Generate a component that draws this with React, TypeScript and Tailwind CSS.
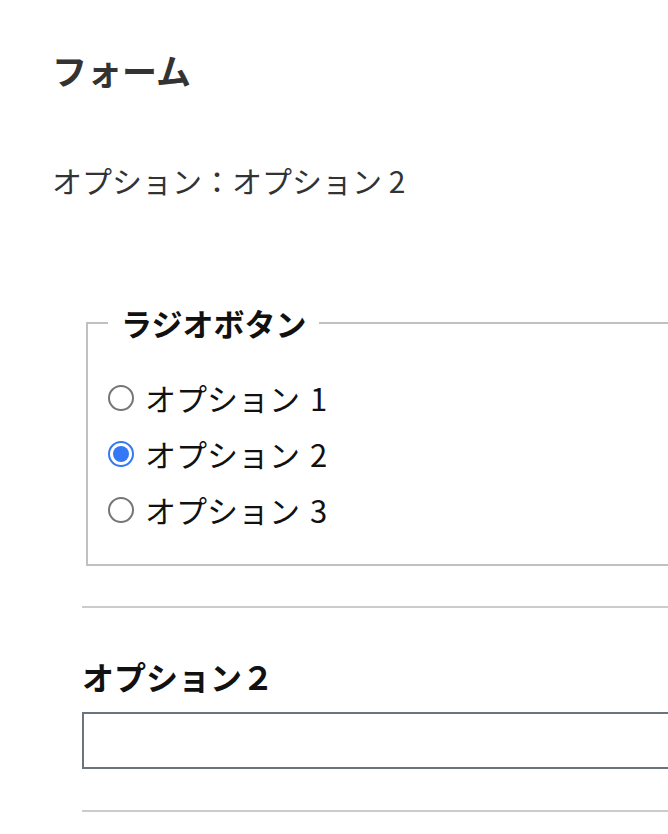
import { useState } from "react";

const OPTIONS = ["1", "2", "3"];

function Radio({ checked }: { checked: boolean }) {
  return checked ? (
    <span className="flex h-[26px] w-[26px] shrink-0 items-center justify-center rounded-full border-[2.5px] border-[#3478f6] bg-white">
      <span className="h-[16px] w-[16px] rounded-full bg-[#3478f6]" />
    </span>
  ) : (
    <span className="h-[26px] w-[26px] shrink-0 rounded-full border-2 border-[#767676] bg-white" />
  );
}

export default function App() {
  const [value, setValue] = useState(1);
  const [text, setText] = useState("");

  return (
    <div className="w-[668px] overflow-hidden bg-white pb-[40px] pl-[52px] font-['Noto_Sans_CJK_JP',sans-serif]">
      <div className="w-[760px]">
        <h1 className="pt-[50px] text-[35px] leading-[40px] font-bold text-[#333]">フォーム</h1>
        <p className="mt-[70px] text-[30px] leading-[40px] text-[#333]">
          オプション：オプション {OPTIONS[value]}
        </p>

        <fieldset className="mt-[105px] ml-[34px] border-2 border-[#c0c0c0] px-[20px] pb-[26px]">
          <legend className="px-[13px] text-[31px] leading-[36px] font-bold text-[#111]">
            ラジオボタン
          </legend>
          <div className="mt-[29px] flex flex-col">
            {OPTIONS.map((o, i) => (
              <label
                key={o}
                className="flex h-[56px] cursor-pointer items-center gap-[11px] text-[31px] text-[#111]"
                onClick={() => setValue(i)}
              >
                <Radio checked={value === i} />
                <span className="leading-[56px]">
                  オプション<span className="ml-[10px]">{o}</span>
                </span>
              </label>
            ))}
          </div>
        </fieldset>

        <div className="ml-[30px]">
          <hr className="mt-[40px] border-t-2 border-[#cccccc]" />
          <p className="mt-[48px] text-[32px] leading-[40px] font-bold text-[#111]">
            オプション２
          </p>
          <input
            value={text}
            onChange={(e) => setText(e.target.value)}
            className="mt-[16px] block h-[57px] w-full border-2 border-[#6b747c] bg-white px-3 text-[28px] outline-none"
          />
          <hr className="mt-[41px] border-t-2 border-[#cccccc]" />
        </div>
      </div>
    </div>
  );
}
